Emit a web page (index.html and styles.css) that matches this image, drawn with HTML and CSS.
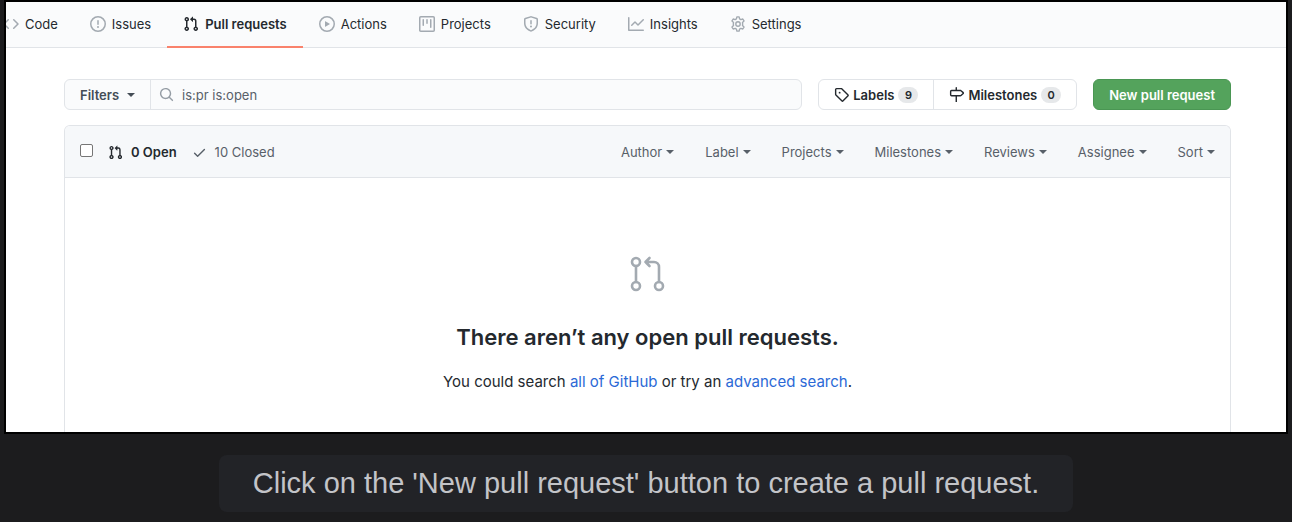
FILE: index.html
```html
<!DOCTYPE html>
<html lang="en">
<head>
<meta charset="utf-8">
<title>Pull requests</title>
<link rel="stylesheet" href="styles.css">
</head>
<body>
<svg class="defs" aria-hidden="true">
  <symbol id="pr" viewBox="0 0 16 16"><path fill-rule="evenodd" d="M7.177 3.073L9.573.677A.25.25 0 0110 .854v4.792a.25.25 0 01-.427.177L7.177 3.427a.25.25 0 010-.354zM3.75 2.5a.75.75 0 100 1.5.75.75 0 000-1.5zm-2.25.75a2.25 2.25 0 113 2.122v5.256a2.251 2.251 0 11-1.5 0V5.372A2.25 2.25 0 011.5 3.25zM11 2.5h-1V4h1a1 1 0 011 1v5.628a2.251 2.251 0 101.5 0V5A2.5 2.5 0 0011 2.5zm1 10.25a.75.75 0 111.5 0 .75.75 0 01-1.5 0zM3.75 12a.75.75 0 100 1.5.75.75 0 000-1.5z"/></symbol>
</svg>
<main class="frame">
  <nav class="tabs" aria-label="Repository">
    <a class="tab" href="#"><svg class="icon" viewBox="0 0 16 16"><path fill-rule="evenodd" d="M4.72 3.22a.75.75 0 011.06 1.06L2.06 8l3.72 3.72a.75.75 0 11-1.06 1.06L.47 8.53a.75.75 0 010-1.06l4.25-4.25zm6.56 0a.75.75 0 10-1.06 1.06L13.94 8l-3.72 3.72a.75.75 0 101.06 1.06l4.25-4.25a.75.75 0 000-1.06l-4.25-4.25z"/></svg>Code</a>
    <a class="tab" href="#"><svg class="icon" viewBox="0 0 16 16"><path fill-rule="evenodd" d="M8 1.5a6.5 6.5 0 100 13 6.5 6.5 0 000-13zM0 8a8 8 0 1116 0A8 8 0 010 8zm9 3a1 1 0 11-2 0 1 1 0 012 0zm-.25-6.25a.75.75 0 00-1.5 0v3.5a.75.75 0 001.5 0v-3.5z"/></svg>Issues</a>
    <a class="tab tab-current" href="#" aria-current="page"><svg class="icon"><use href="#pr"/></svg>Pull requests</a>
    <a class="tab" href="#"><svg class="icon" viewBox="0 0 16 16"><path fill-rule="evenodd" d="M1.5 8a6.5 6.5 0 1113 0 6.5 6.5 0 01-13 0zM8 0a8 8 0 100 16A8 8 0 008 0zM6.379 5.227A.25.25 0 006 5.442v5.117a.25.25 0 00.379.214l4.264-2.559a.25.25 0 000-.428L6.379 5.227z"/></svg>Actions</a>
    <a class="tab" href="#"><svg class="icon" viewBox="0 0 16 16"><path fill-rule="evenodd" d="M1.75 0A1.75 1.75 0 000 1.75v12.5C0 15.216.784 16 1.75 16h12.5A1.75 1.75 0 0016 14.25V1.75A1.75 1.75 0 0014.25 0H1.75zM1.5 1.75a.25.25 0 01.25-.25h12.5a.25.25 0 01.25.25v12.5a.25.25 0 01-.25.25H1.75a.25.25 0 01-.25-.25V1.75zM11.75 3a.75.75 0 00-.75.75v7.5a.75.75 0 001.5 0v-7.5a.75.75 0 00-.75-.75zm-8.25.75a.75.75 0 011.5 0v5.5a.75.75 0 01-1.5 0v-5.5zM8 3a.75.75 0 00-.75.75v3.5a.75.75 0 001.5 0v-3.5A.75.75 0 008 3z"/></svg>Projects</a>
    <a class="tab" href="#"><svg class="icon" viewBox="0 0 16 16"><path fill-rule="evenodd" d="M7.467.133a1.75 1.75 0 011.066 0l5.25 1.68A1.75 1.75 0 0115 3.48V7c0 1.566-.32 3.182-1.303 4.682-.983 1.498-2.585 2.813-5.032 3.855a1.7 1.7 0 01-1.33 0c-2.447-1.042-4.049-2.357-5.032-3.855C1.32 10.182 1 8.566 1 7V3.48a1.75 1.75 0 011.217-1.667l5.25-1.68zm.61 1.429a.25.25 0 00-.153 0l-5.25 1.68a.25.25 0 00-.174.238V7c0 1.358.275 2.666 1.057 3.86.784 1.194 2.121 2.34 4.366 3.297a.2.2 0 00.154 0c2.245-.956 3.582-2.104 4.366-3.298C13.225 9.666 13.5 8.36 13.5 7V3.48a.25.25 0 00-.174-.237l-5.25-1.68zM9 10.5a1 1 0 11-2 0 1 1 0 012 0zm-.25-5.75a.75.75 0 10-1.5 0v3a.75.75 0 001.5 0v-3z"/></svg>Security</a>
    <a class="tab" href="#"><svg class="icon" viewBox="0 0 16 16"><path fill-rule="evenodd" d="M1.5 1.75a.75.75 0 00-1.5 0v12.5c0 .414.336.75.75.75h14.5a.75.75 0 000-1.5H1.5V1.75zm14.28 2.53a.75.75 0 00-1.06-1.06L10 7.94 7.53 5.47a.75.75 0 00-1.06 0L3.22 8.72a.75.75 0 001.06 1.06L7 7.06l2.47 2.47a.75.75 0 001.06 0l5.25-5.25z"/></svg>Insights</a>
    <a class="tab" href="#"><svg class="icon icon-line" viewBox="0 0 16 16"><circle cx="8" cy="8" r="2.2"/><path d="M6.9.9h2.2l.5 2 1.2.7 2-.6 1.2 1.9-1.5 1.5q.3 1.6 0 3.2l1.5 1.5-1.2 1.9-2-.6-1.2.7-.5 2H6.9l-.5-2-1.2-.7-2 .6L2 11.1l1.5-1.5q-.3-1.6 0-3.2L2 4.9 3.2 3l2 .6 1.2-.7z"/></svg>Settings</a>
  </nav>

  <div class="content">
    <div class="toolbar">
      <form class="search">
        <button class="filters" type="button">Filters<span class="caret"></span></button>
        <label class="query">
          <svg class="icon" viewBox="0 0 16 16" aria-hidden="true"><path fill-rule="evenodd" d="M11.5 7a4.499 4.499 0 11-8.998 0A4.499 4.499 0 0111.5 7zm-.82 4.74a6 6 0 111.06-1.06l3.04 3.04a.75.75 0 11-1.06 1.06l-3.04-3.04z"/></svg>
          <input class="query-input" type="text" value="is:pr is:open" aria-label="Search pull requests">
        </label>
      </form>
      <div class="links">
        <a class="link-button" href="#"><svg class="icon" viewBox="0 0 16 16"><path fill-rule="evenodd" d="M2.5 7.775V2.75a.25.25 0 01.25-.25h5.025a.25.25 0 01.177.073l6.25 6.25a.25.25 0 010 .354l-5.025 5.025a.25.25 0 01-.354 0l-6.25-6.25a.25.25 0 01-.073-.177zm-1.5 0V2.75C1 1.784 1.784 1 2.75 1h5.025c.464 0 .91.184 1.238.513l6.25 6.25a1.75 1.75 0 010 2.474l-5.026 5.026a1.75 1.75 0 01-2.474 0l-6.25-6.25A1.75 1.75 0 011 7.775zM6 5a1 1 0 100 2 1 1 0 000-2z"/></svg>Labels<span class="count">9</span></a>
        <a class="link-button" href="#"><svg class="icon" viewBox="0 0 16 16"><path fill-rule="evenodd" d="M7.75 0a.75.75 0 01.75.75V3h3.634c.414 0 .814.147 1.13.414l2.07 1.75a1.75 1.75 0 010 2.672l-2.07 1.75a1.75 1.75 0 01-1.13.414H8.5v7.25a.75.75 0 11-1.5 0V10H2.75A1.75 1.75 0 011 8.25v-3.5C1 3.784 1.784 3 2.75 3H7V.75A.75.75 0 017.75 0zm0 8.5h4.384a.25.25 0 00.161-.06l2.07-1.75a.25.25 0 000-.38l-2.07-1.75a.25.25 0 00-.161-.06H2.75a.25.25 0 00-.25.25v3.5c0 .138.112.25.25.25h5z"/></svg>Milestones<span class="count">0</span></a>
      </div>
      <button class="primary" type="button">New pull request</button>
    </div>

    <section class="box">
      <header class="box-head">
        <input class="check" type="checkbox" aria-label="Select all">
        <a class="state state-current" href="#"><svg class="icon"><use href="#pr"/></svg>0 Open</a>
        <a class="state" href="#"><svg class="icon" viewBox="0 0 16 16"><path fill-rule="evenodd" d="M13.78 4.22a.75.75 0 010 1.06l-7.25 7.25a.75.75 0 01-1.06 0L2.22 9.28a.75.75 0 011.06-1.06L6 10.94l6.72-6.72a.75.75 0 011.06 0z"/></svg>10 Closed</a>
        <div class="menus">
          <button class="menu" type="button">Author<span class="caret"></span></button>
          <button class="menu" type="button">Label<span class="caret"></span></button>
          <button class="menu" type="button">Projects<span class="caret"></span></button>
          <button class="menu" type="button">Milestones<span class="caret"></span></button>
          <button class="menu" type="button">Reviews<span class="caret"></span></button>
          <button class="menu" type="button">Assignee<span class="caret"></span></button>
          <button class="menu" type="button">Sort<span class="caret"></span></button>
        </div>
      </header>
      <div class="blank">
        <svg class="blank-icon" viewBox="0 0 36 36" aria-hidden="true"><circle cx="6" cy="6" r="4"/><circle cx="6" cy="30" r="4"/><circle cx="29" cy="30" r="4"/><path d="M6 10v16M29 26V11a5 5 0 0 0-5-5H15.500M19.500 2L15.500 6l4 4"/></svg>
        <h1 class="blank-title">There aren’t any open pull requests.</h1>
        <p class="blank-text">You could search <a class="link" href="#">all of GitHub</a> or try an <a class="link" href="#">advanced search</a>.</p>
      </div>
    </section>
  </div>
</main>
<p class="caption">Click on the 'New pull request' button to create a pull request.</p>
</body>
</html>
```
FILE: styles.css
```css
* { box-sizing: border-box; }
body {
  margin: 0;
  padding: 0 4px;
  background: #1c1c1e;
  color: #24292e;
  font: 13px/20px Inter, "Liberation Sans", sans-serif;
}
a { color: inherit; text-decoration: none; }
button, input { font: inherit; color: inherit; }
.defs { display: none; }
.frame { border: 2px solid #000; background: #fff; overflow: hidden; }
.icon { width: 15px; height: 15px; flex: none; fill: currentColor; }
.icon-line { fill: none; stroke: currentColor; stroke-width: 1.4; stroke-linejoin: round; }
.caret { border: 4px solid transparent; border-top-color: currentColor; border-bottom: 0; }

.tabs {
  display: flex;
  height: 46px;
  margin-left: -19px;
  background: #fafbfc;
  border-bottom: 1px solid #e1e4e8;
}
.tab {
  display: flex;
  align-items: center;
  gap: 6px;
  margin-bottom: -1px;
  padding: 0 16px;
  border-bottom: 2px solid transparent;
  white-space: nowrap;
}
.tab .icon { width: 16px; height: 16px; color: #a3aab1; }
.tab-current { font-weight: 600; border-bottom-color: #f9826c; }
.tab-current .icon { color: #24292e; }

.content { padding: 31px 55px 0 58px; }
.toolbar { display: flex; gap: 16px; margin-bottom: 15px; }
.search {
  display: flex;
  flex: 1;
  height: 31px;
  border: 1px solid #e1e4e8;
  border-radius: 6px;
  background: #fafbfc;
  overflow: hidden;
}
.filters {
  display: flex;
  align-items: center;
  gap: 8px;
  padding: 0 15px;
  border: 0;
  border-right: 1px solid #e1e4e8;
  background: none;
  color: #444d56;
  font-weight: 600;
}
.query { display: flex; flex: 1; align-items: center; gap: 8px; padding: 0 8px; color: #959da5; }
.query-input { flex: 1; min-width: 0; padding: 0; border: 0; outline: 0; background: none; color: #586069; }
.links { display: flex; border: 1px solid #e1e4e8; border-radius: 6px; }
.link-button { display: flex; align-items: center; gap: 4px; padding: 0 15px; font-weight: 600; }
.link-button + .link-button { border-left: 1px solid #e1e4e8; }
.count {
  min-width: 20px;
  padding: 0 6px;
  border-radius: 8px;
  background: #e6e8ea;
  font-size: 11px;
  line-height: 16px;
  text-align: center;
}
.primary {
  padding: 0 15px;
  border: 1px solid #4a9653;
  border-radius: 6px;
  background: #54a35c;
  color: #fff;
  font-weight: 600;
}

.box { border: 1px solid #e1e4e8; border-bottom: 0; border-radius: 6px 6px 0 0; overflow: hidden; }
.box-head {
  display: flex;
  align-items: center;
  gap: 15px;
  padding: 16px 15px 15px;
  border-bottom: 1px solid #e1e4e8;
  background: #f6f8fa;
  color: #586069;
}
.check {
  width: 13px;
  height: 13px;
  margin: 0 0 3px;
  appearance: none;
  border: 1px solid #767676;
  border-radius: 2px;
  background: #fff;
}
.state { display: flex; align-items: center; gap: 8px; }
.state-current { color: #24292e; font-weight: 600; }
.menus { display: flex; gap: 31px; margin-left: auto; }
.menu { display: flex; align-items: center; gap: 4px; padding: 0; border: 0; background: none; }

.blank { display: flex; flex-direction: column; align-items: center; padding: 78px 16px 38px; }
.blank-icon { width: 36px; height: 36px; fill: none; stroke: #a3aab1; stroke-width: 2.6; stroke-linecap: round; stroke-linejoin: round; }
.blank-title { margin: 29px 0 0; font-size: 22px; line-height: 32px; font-weight: 600; }
.blank-text { margin: 17px 0 0; font-size: 15px; line-height: 24px; }
.link { color: #2b69d6; }

.caption {
  width: fit-content;
  margin: 21px auto 10px;
  padding: 12px 34px;
  border-radius: 8px;
  background: #222327;
  color: #c3c4c8;
  font: 29px/33px "Liberation Sans", Arial, sans-serif;
}
```
